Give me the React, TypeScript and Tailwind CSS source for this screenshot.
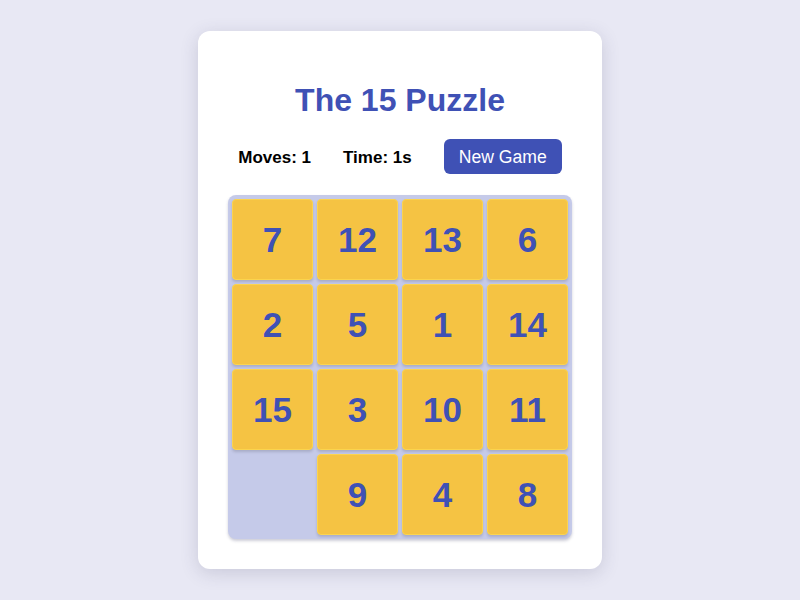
import { useState } from "react";

const START = [7, 12, 13, 6, 2, 5, 1, 14, 15, 3, 10, 11, 0, 9, 4, 8];

export default function App() {
  const [tiles] = useState(START);

  return (
    <main className="min-h-screen w-full flex items-center justify-center bg-[#e8e8f4] font-['Liberation_Sans',Arial,sans-serif]">
      <div className="w-[404px] p-[30px] rounded-[12px] bg-white shadow-[0_4px_18px_rgba(60,60,100,0.18)]">
        <h1 className="mt-[21px] mb-[20px] text-center text-[32px] leading-[37px] font-bold text-[#3f51b5]">
          The 15 Puzzle
        </h1>

        <div className="flex items-center justify-center gap-8 h-[35px]">
          <span className="pt-[2px] text-[17px] font-bold text-black">Moves: 1</span>
          <span className="pt-[2px] text-[17px] font-bold text-black">Time: 1s</span>
          <button className="h-[35px] px-[15px] pt-[1px] rounded-[6px] bg-[#3f51b5] text-white text-[17.6px]">
            New Game
          </button>
        </div>

        <div className="mt-[21px] w-[344px] h-[344px] p-[4px] grid grid-cols-4 grid-rows-4 gap-[4px] rounded-[8px] bg-[#c5cae9] shadow-[0_2px_3px_rgba(60,60,100,0.25)]">
          {tiles.map((n, i) =>
            n === 0 ? (
              <div key={i} />
            ) : (
              <div
                key={i}
                className="flex items-center justify-center pt-[2px] rounded-[4px] border border-[#fbd44e] bg-[#f5c343] shadow-[0_2px_3px_rgba(0,0,0,0.15)] text-[35px] font-bold text-[#3f51b5]"
              >
                {n}
              </div>
            )
          )}
        </div>
      </div>
    </main>
  );
}
